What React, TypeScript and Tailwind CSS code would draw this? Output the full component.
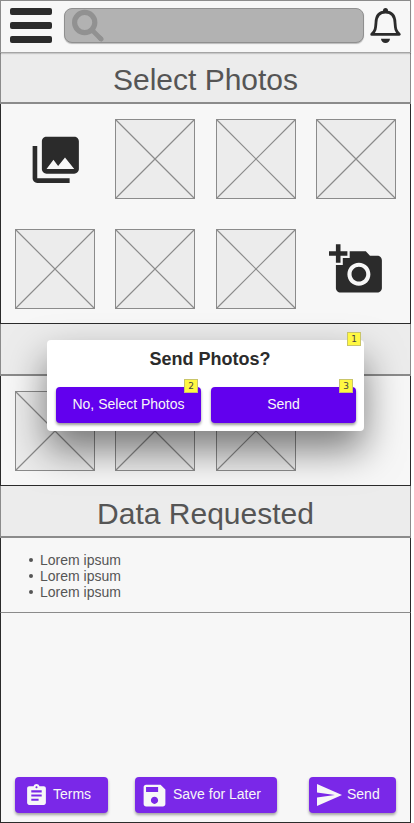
import type { ReactNode } from "react";

const sans = "font-['Liberation_Sans',Arial,sans-serif]";

function Placeholder() {
  return (
    <svg className="block h-20 w-20" viewBox="0 0 80 80" fill="none" stroke="#8b8b8b">
      <rect x="0.5" y="0.5" width="79" height="79" fill="#ececec" />
      <path d="M0.5 0.5L79.5 79.5M79.5 0.5L0.5 79.5" strokeWidth="1.2" />
    </svg>
  );
}

function Cell({ children }: { children: ReactNode }) {
  return <div className="flex h-20 w-20 items-center justify-center pt-[2px] pl-[2px]">{children}</div>;
}

function LibraryIcon() {
  return (
    <svg className="h-[55.5px] w-[55.5px]" viewBox="0 0 24 24" fill="#2b2b2b">
      <path d="M22 16V4c0-1.1-.9-2-2-2H8c-1.1 0-2 .9-2 2v12c0 1.1.9 2 2 2h12c1.1 0 2-.9 2-2zm-11-4l2.03 2.71L16 11l4 5H8l3-4zM2 6v14c0 1.1.9 2 2 2h14v-2H4V6H2z" />
    </svg>
  );
}

function AddPhotoIcon() {
  return (
    <svg className="h-[55.2px] w-[55.2px]" viewBox="0 0 24 24" fill="#2b2b2b">
      <path d="M3 4V1h2v3h3v2H5v3H3V6H0V4h3zm3 6V7h3V4h7l1.83 2H21c1.1 0 2 .9 2 2v12c0 1.1-.9 2-2 2H5c-1.1 0-2-.9-2-2V10h3zm7 9c2.76 0 5-2.24 5-5s-2.24-5-5-5-5 2.24-5 5 2.24 5 5 5zm-3.2-5c0 1.77 1.43 3.2 3.2 3.2s3.2-1.43 3.2-3.2-1.43-3.2-3.2-3.2-3.2 1.43-3.2 3.2z" />
    </svg>
  );
}

function Heading({ className, children }: { className: string; children?: ReactNode }) {
  return (
    <h2
      className={`flex w-full shrink-0 justify-center border-x border-b-2 border-[#8b8b8b] bg-[#ececec] text-[30px] leading-[34px] text-[#555] ${className}`}
    >
      {children}
    </h2>
  );
}

function Label({ children }: { children: ReactNode }) {
  return <span className="inline-block origin-bottom -translate-y-px scale-y-[1.07] leading-4">{children}</span>;
}

function FooterButton({ className, children }: { className: string; children: ReactNode }) {
  return (
    <button
      className={`flex h-9 items-center rounded bg-[#7a28e8] text-sm whitespace-nowrap text-[#f7f7f7] shadow-[0_2px_3px_rgba(0,0,0,0.35)] ${className}`}
    >
      {children}
    </button>
  );
}

function Note({ className, children }: { className: string; children: ReactNode }) {
  return (
    <span
      className={`absolute flex h-[14px] w-[14px] items-center justify-center border border-[#c9c56a] bg-[#fff842] font-['DejaVu_Sans',sans-serif] text-[9px] leading-none text-[#444] ${className}`}
    >
      {children}
    </span>
  );
}

export default function App() {
  return (
    <div className={`relative h-[823px] w-[414px] overflow-hidden bg-white ${sans}`}>
      <div className="flex h-full w-[411px] flex-col bg-[#f7f7f7]">
        <header className="relative flex h-[53px] shrink-0 items-start border border-[#8b8b8b] border-b-[#a5a5a5] pt-[7px] pl-[9px] shadow-[0_1px_1px_rgba(0,0,0,0.15)]">
          <div className="flex w-[42px] flex-col gap-[7px]">
            <div className="h-[7px] rounded-[2px] bg-[#2b2b2b]" />
            <div className="h-[7px] rounded-[2px] bg-[#2b2b2b]" />
            <div className="h-[7px] rounded-[2px] bg-[#2b2b2b]" />
          </div>
          <div className="ml-3 h-[35px] w-[300px] rounded-[8px] border border-[#8f8f8f] bg-[#b2b2b2] pl-[7px] shadow-[0_1px_1px_rgba(0,0,0,0.25)]">
            <svg className="block h-[33px] w-[33px]" viewBox="72 9 33 33" fill="none" stroke="#919191">
              <circle cx="84.7" cy="22.5" r="10.1" strokeWidth="5.2" />
              <path d="M93 31L101.5 39.5" strokeWidth="4.6" />
              <path d="M100 38L101.2 39.2" strokeWidth="4.6" strokeLinecap="round" />
            </svg>
          </div>
          <svg className="ml-[6px] block h-9 w-8" viewBox="370 8 32 36" fill="none" stroke="#2b2b2b" strokeWidth="2.8">
            <path
              strokeLinejoin="round"
              d="M371.7 34.4C375.5 31 375.6 28.5 376 22.5C376.3 15.5 379.8 12 385.5 12C391.2 12 394.7 15.5 395 22.5C395.4 28.5 395.5 31 399.3 34.4Z"
            />
            <path d="M383 11.5V10.5A2.5 2.5 0 0 1 388 10.5V11.5Z" fill="#2b2b2b" stroke="none" />
            <path d="M381 38.7H390A4.5 4.2 0 0 1 381 38.7Z" fill="#2b2b2b" stroke="none" />
          </svg>
        </header>
        <Heading className="h-[51px] pt-[10px]">Select Photos</Heading>

        <section className="h-[220px] shrink-0 border-x border-b border-[#2b2b2b] pt-[15px] pl-[14px]">
          <div className="grid grid-cols-[100px_101px_100px_80px] gap-y-[30px]">
            <Cell><LibraryIcon /></Cell>
            <Placeholder />
            <Placeholder />
            <Placeholder />
            <Placeholder />
            <Placeholder />
            <Placeholder />
            <Cell><AddPhotoIcon /></Cell>
          </div>
        </section>
        <Heading className="h-[52px]" />

        <section className="h-[110px] shrink-0 border-x border-b border-[#2b2b2b] pt-[15px] pl-[14px]">
          <div className="grid grid-cols-[100px_101px_100px_80px]">
            <Placeholder />
            <Placeholder />
            <Placeholder />
          </div>
        </section>
        <Heading className="h-[52px] pt-[11px]">Data Requested</Heading>

        <section className="h-[75px] shrink-0 border-x border-b border-[#2b2b2b] border-b-[#8b8b8b] pt-[14px] pl-[27px]">
          <ul className="text-sm leading-4 text-[#555]">
            {[1, 2, 3].map((n) => (
              <li key={n} className="flex items-center">
                <span className="mr-[7px] ml-[1px] h-1 w-1 rounded-full bg-[#555]" />
                Lorem ipsum
              </li>
            ))}
          </ul>
        </section>

        <footer className="flex flex-1 items-end border-x border-b border-[#2b2b2b] pb-[9px] pl-[14px]">
          <FooterButton className="w-[93px] pl-[9px]">
            <svg className="mr-[4px] h-[25px] w-[25px]" viewBox="0 0 24 24" fill="currentColor">
              <path d="M19 3h-4.18C14.4 1.84 13.3 1 12 1c-1.3 0-2.4.84-2.82 2H5c-1.1 0-2 .9-2 2v14c0 1.1.9 2 2 2h14c1.1 0 2-.9 2-2V5c0-1.1-.9-2-2-2zm-7 0c.55 0 1 .45 1 1s-.45 1-1 1-1-.45-1-1 .45-1 1-1zm2 14H7v-2h7v2zm3-4H7v-2h10v2zm0-4H7V7h10v2z" />
            </svg>
            <Label>Terms</Label>
          </FooterButton>
          <FooterButton className="ml-[27px] w-[142px] pl-[5px]">
            <svg className="mr-[4px] h-[29px] w-[29px]" viewBox="0 0 24 24" fill="currentColor">
              <path d="M17 3H5c-1.11 0-2 .9-2 2v14c0 1.1.89 2 2 2h14c1.1 0 2-.9 2-2V7l-4-4zm-5 16c-1.66 0-3-1.34-3-3s1.34-3 3-3 3 1.34 3 3-1.34 3-3 3zm3-10H5V5h10v4z" />
            </svg>
            <Label>Save for Later</Label>
          </FooterButton>
          <FooterButton className="ml-8 w-[87px] pl-2">
            <svg className="mr-[5px] h-[22px] w-[25px]" viewBox="2 3 21 18" preserveAspectRatio="none" fill="currentColor">
              <path d="M2.01 21L23 12 2.01 3 2 10l15 2-15 2z" />
            </svg>
            <Label>Send</Label>
          </FooterButton>
        </footer>
      </div>

      <div
        role="dialog"
        className="absolute top-[340px] left-[47px] h-[91px] w-[317px] rounded bg-white px-[8px] pt-[8px] pl-[9px] shadow-[0_19px_38px_rgba(0,0,0,0.5)]"
      >
        <h3 className="pl-[8px] text-center text-lg leading-[22px] font-bold text-[#2b2b2b]">Send Photos?</h3>
        <div className="mt-[17px] flex gap-[10px]">
          <button className="h-9 w-[145px] rounded bg-[#6200ee] text-sm whitespace-nowrap text-[#f7f7f7] shadow-[0_2px_3px_rgba(0,0,0,0.4)]">
            <Label>No, Select Photos</Label>
          </button>
          <button className="h-9 w-[145px] rounded bg-[#6200ee] text-sm text-[#f7f7f7] shadow-[0_2px_3px_rgba(0,0,0,0.4)]">
            <Label>Send</Label>
          </button>
        </div>
        <Note className="top-[-8px] left-[300px]">1</Note>
        <Note className="top-[39px] left-[137px]">2</Note>
        <Note className="top-[39px] left-[292px]">3</Note>
      </div>
    </div>
  );
}
